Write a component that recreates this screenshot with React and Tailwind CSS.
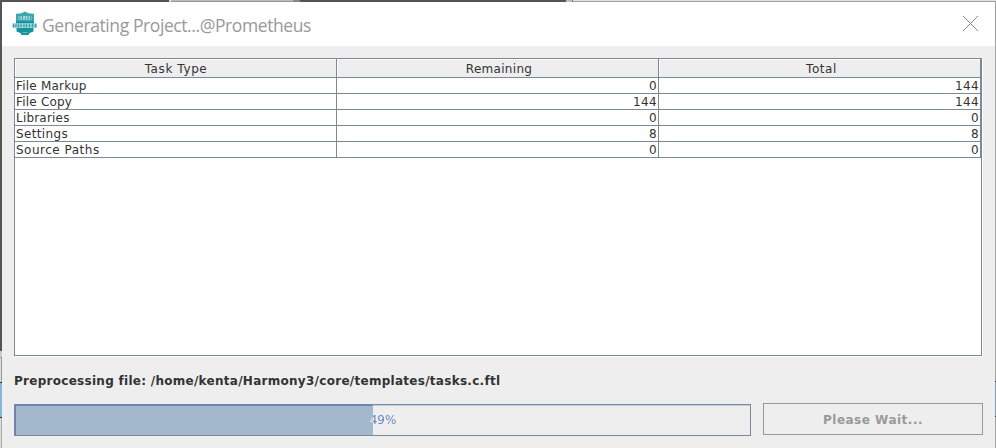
const columns = [
  { label: "Task Type", style: "tracking-[0.6px]" },
  { label: "Remaining", style: "tracking-[0.3px] pl-[2px]" },
  { label: "Total", style: "tracking-[0.6px] pl-[3px]" },
];

const rows = [
  { name: "File Markup", remaining: 0, total: 144, style: "tracking-[0.2px]" },
  { name: "File Copy", remaining: 144, total: 144, style: "tracking-[0.2px]" },
  { name: "Libraries", remaining: 0, total: 0, style: "tracking-[0.2px]" },
  { name: "Settings", remaining: 8, total: 8, style: "tracking-[0.35px]" },
  { name: "Source Paths", remaining: 0, total: 0, style: "tracking-[0.5px]" },
];

function HarmonyLogo() {
  return (
    <svg width="26" height="26" viewBox="0 0 26 26" className="shrink-0">
      <path d="M13 0.500 Q16 3 22 2.800 V11 H4 V2.800 Q10 3 13 0.500Z" fill="#3aa7ae" />
      <path d="M6.500 5h13v4h-13z" fill="#9fd3d6" />
      <path d="M8 5v4M10.500 5v4M13.500 6.500v3M16 5v4M18.500 5v4" stroke="#3aa7ae" strokeWidth="1" />
      <path d="M4 10.500h18v2H4z" fill="#07909a" />
      <path d="M4.500 16.500h17v4l-4 1.500-1 2h-7l-1-2-4-1.500z" fill="#14939c" />
      <path d="M0.500 12.500h24.500v4.500H0.500z" fill="#a9dadd" />
      <path d="M1.500 12.500v4M4 12.500v4M6.500 12.500v4M9 12.500v4M12 12.500v4M14.500 12.500v4M17.500 12.500v4M20.500 12.500v4M23.500 12.500v4" stroke="#2fa3ab" strokeWidth="1.100" />
      <path d="M0.500 14.800h24.500" stroke="#48b0b6" strokeWidth="0.900" />
      <path d="M10.500 21.500h5" stroke="#63bbc0" strokeWidth="1" />
    </svg>
  );
}

function Backdrop() {
  return (
    <div className="flex h-[2px] shrink-0">
      <div className="w-[169px] bg-[#555]" />
      <div className="w-[2px] bg-[#ddd]" />
      <div className="w-[122px] border-b border-[#999] bg-[#bbb]" />
      <div className="w-[7px] bg-[#888]" />
      <div className="w-[266px] bg-[#555]" />
      <div className="w-[6px] bg-[#bbb]" />
      <div className="w-px bg-[#777]" />
      <div className="flex-1 border-b border-[#a0a0a0] bg-[#e3e3e3]" />
    </div>
  );
}

export default function App() {
  return (
    <div className="flex h-[448px] w-[996px] flex-col overflow-hidden bg-[#eee] font-['DejaVu_Sans',sans-serif] text-[12px] text-[#333]">
      <Backdrop />
      <div className="flex min-h-0 flex-1">
        <div className="flex w-[2px] shrink-0 flex-col">
          <div className="h-[349px] bg-[#555]" />
          <div className="h-[6px] bg-[#ccc]" />
          <div className="h-[25px] border-t border-r border-[#999] bg-[#ddd]" />
          <div className="h-[36px] border-y border-[#333] bg-[#83b8dc]" />
          <div className="flex-1 border-r border-[#aaa] bg-[#ddd]" />
        </div>
        <div className="flex min-w-0 flex-1 flex-col">
          <header className="flex h-11 shrink-0 items-center bg-white pl-[10px] pr-4">
            <HarmonyLogo />
            <h1 className="ml-1 flex-1 whitespace-nowrap pt-px font-['Open_Sans',sans-serif] text-[17.5px] leading-6 tracking-[-0.41px] text-[#999]">
              Generating Project...@Prometheus
            </h1>
            <svg width="17" height="17" viewBox="0 0 17 17" className="mb-px shrink-0">
              <path d="M1 1l15 15M16 1L1 16" stroke="#888" strokeWidth="1" fill="none" />
            </svg>
          </header>
          <main className="flex flex-1 flex-col px-3 pt-3">
            <div className="h-[298px] w-[968px] shrink-0 border border-[#7a8a99] bg-white shadow-[1px_1px_0_#fff]">
              <div className="grid h-[19px] grid-cols-[322px_322px_322px] border-b border-[#7a8a99]">
                {columns.map((column) => (
                  <div key={column.label} className="border-r border-[#7a8a99]">
                    <div className="h-[18px] border-l border-t border-white bg-[#eee] text-center leading-[18px]">
                      <span className={column.style}>{column.label}</span>
                    </div>
                  </div>
                ))}
              </div>
              {rows.map((row) => (
                <div key={row.name} className="grid h-4 grid-cols-[322px_322px_322px] border-b border-[#7a8a99] leading-[17px]">
                  <div className="h-[15px] border-r border-[#7a8a99] pl-px">
                    <span className={row.style}>{row.name}</span>
                  </div>
                  <div className="h-[15px] border-r border-[#7a8a99] pr-px text-right tracking-[0.4px]">{row.remaining}</div>
                  <div className="h-[15px] border-r border-[#7a8a99] pr-px text-right tracking-[0.4px]">{row.total}</div>
                </div>
              ))}
            </div>
            <p className="mt-[17px] h-4 whitespace-nowrap font-bold leading-4 tracking-[0.28px]">
              Preprocessing file: /home/kenta/Harmony3/core/templates/tasks.c.ftl
            </p>
            <div className="mt-[14px] flex">
              <div className="mt-px h-8 w-[737px] border border-[#7a8a99] bg-[linear-gradient(to_right,#a3b8cc_358px,#eee_358px)]">
                <div className="h-[30px] border-l border-t border-l-[#6382bf] border-t-[#b8cfe5] [border-image:linear-gradient(to_right,#6382bf_358px,#b8cfe5_358px)_1]">
                  <div className="bg-[linear-gradient(to_right,#eee_357px,#6382bf_357px)] bg-clip-text text-center leading-[29px] text-transparent">
                    49%
                  </div>
                </div>
              </div>
              <button className="ml-3 h-8 w-[220px] border border-[#999] pt-px font-bold tracking-[0.5px] text-[#999]">
                Please Wait...
              </button>
            </div>
          </main>
        </div>
        <div className="flex w-px shrink-0 flex-col">
          <div className="flex-1 bg-[#a0a0a0]" />
          <div className="h-9 border-y border-[#333] bg-[#7f9fb8]" />
          <div className="h-[31px] bg-[#a0a0a0]" />
        </div>
      </div>
    </div>
  );
}
